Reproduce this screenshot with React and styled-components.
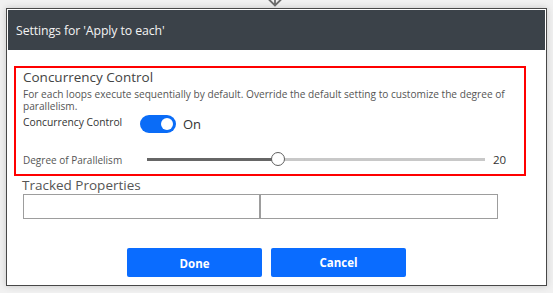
import React from "react";
import styled, { createGlobalStyle } from "styled-components";

const GlobalStyle = createGlobalStyle`
  html, body { margin: 0; padding: 0; }
  body {
    background: #f1f1f1;
    font-family: "Open Sans", "Noto Sans", sans-serif;
  }
  * { box-sizing: border-box; }
`;

const Page = styled.div`
  position: relative;
  width: 553px;
  height: 293px;
  padding: 8px 6px 0;
  overflow: hidden;
`;

const ConnectorArrow = styled.svg`
  position: absolute;
  left: 267px;
  top: -3px;
`;

const Dialog = styled.div`
  width: 541px;
  height: 278px;
  border: 1px solid #474747;
  background: #ffffff;
  box-shadow: 0 0 7px rgba(0, 0, 0, 0.18);
  display: flex;
  flex-direction: column;
`;

const Header = styled.div`
  height: 40px;
  margin: 1px 1px 0;
  background: #3b4249;
  color: #f3f3f3;
  display: flex;
  align-items: center;
  padding-left: 8px;
  font-size: 12.3px;
  letter-spacing: -0.1px;
`;

const Body = styled.div`
  display: flex;
  flex-direction: column;
  padding: 16px 0 0 7px;
`;

const Highlight = styled.section`
  width: 512px;
  height: 110px;
  border: 2px solid #ff0000;
  padding: 0 7px;
  display: flex;
  flex-direction: column;
`;

const SectionTitle = styled.div`
  font-size: 13.5px;
  line-height: 17px;
  color: #444;
  margin-top: 1px;
`;

const Description = styled.p`
  margin: 2px 0 0;
  width: 494px;
  font-size: 10.15px;
  line-height: 12px;
  color: #555;
`;

const Row = styled.div`
  display: flex;
  align-items: center;
  margin-top: ${(p) => p.$top}px;
`;

const FieldLabel = styled.span`
  width: ${(p) => p.$width}px;
  flex: none;
  font-size: ${(p) => (p.$strong ? 10.3 : 10)}px;
  color: ${(p) => (p.$strong ? "#333" : "#555")};
  font-weight: ${(p) => (p.$strong ? 500 : 400)};
  align-self: ${(p) => p.$align || "center"};
`;

const Toggle = styled.span`
  width: 36px;
  height: 18px;
  border-radius: 9px;
  background: #0a6cf7;
  display: flex;
  align-items: center;
  justify-content: flex-end;
  padding-right: 3px;
  flex: none;
`;

const Knob = styled.span`
  width: 12px;
  height: 12px;
  border-radius: 50%;
  background: #fff;
`;

const ToggleText = styled.span`
  margin-left: 7px;
  font-size: 13px;
  color: #333;
`;

const Slider = styled.div`
  position: relative;
  width: 338px;
  height: 3px;
  background: #c8c8c8;
  flex: none;
`;

const SliderFill = styled.div`
  height: 3px;
  background: #666;
`;

const Thumb = styled.div`
  position: absolute;
  top: -6px;
  width: 14px;
  height: 14px;
  margin-left: -7px;
  border-radius: 50%;
  background: #fff;
  border: 1px solid #5f5f5f;
`;

const SliderValue = styled.span`
  margin-left: 8px;
  font-size: 11.5px;
  color: #333;
`;

const TrackedTitle = styled.div`
  margin: 1px 0 0 8px;
  font-size: 13.5px;
  line-height: 16px;
  color: #555;
`;

const InputRow = styled.div`
  display: flex;
  margin: 1px 0 0 9px;
`;

const TextBox = styled.div`
  width: ${(p) => p.$width}px;
  height: 25px;
  border: 1px solid #9d9d9d;
  background: #fff;
`;

const Actions = styled.div`
  display: flex;
  gap: 9px;
  margin: 29px 0 0 113px;
`;

const Button = styled.button`
  width: 135px;
  height: 29px;
  border: none;
  border-radius: 2px;
  background: #0a6cff;
  color: #fff;
  font-family: "Open Sans", sans-serif;
  font-weight: 700;
  font-size: 11.5px;
  padding: 0;
  padding-top: ${(p) => (p.$low ? 2 : 0)}px;
`;

export default function App() {
  const value = 20;
  const min = 1;
  const max = 50;
  const pct = ((value - min) / (max - min)) * 100;
  return (
    <Page>
      <GlobalStyle />
      <ConnectorArrow width="16" height="10" viewBox="0 0 16 10">
        <path d="M8 0 V8.5 M2 2.5 L8 8.5 L14 2.5" fill="none" stroke="#6c6c6c" strokeWidth="1.8" />
      </ConnectorArrow>
      <Dialog>
        <Header>Settings for 'Apply to each'</Header>
        <Body>
          <Highlight>
            <SectionTitle>Concurrency Control</SectionTitle>
            <Description>
              For each loops execute sequentially by default. Override the default setting to customize the degree of parallelism.
            </Description>
            <Row $top={3}>
              <FieldLabel $width={117} $strong $align="flex-start">Concurrency Control</FieldLabel>
              <Toggle>
                <Knob />
              </Toggle>
              <ToggleText>On</ToggleText>
            </Row>
            <Row $top={19}>
              <FieldLabel $width={124} $align="flex-end">Degree of Parallelism</FieldLabel>
              <Slider>
                <SliderFill style={{ width: `${pct}%` }} />
                <Thumb style={{ left: `${pct}%` }} />
              </Slider>
              <SliderValue>{value}</SliderValue>
            </Row>
          </Highlight>
          <TrackedTitle>Tracked Properties</TrackedTitle>
          <InputRow>
            <TextBox $width={237} />
            <TextBox $width={238} />
          </InputRow>
          <Actions>
            <Button $low>Done</Button>
            <Button>Cancel</Button>
          </Actions>
        </Body>
      </Dialog>
    </Page>
  );
}
